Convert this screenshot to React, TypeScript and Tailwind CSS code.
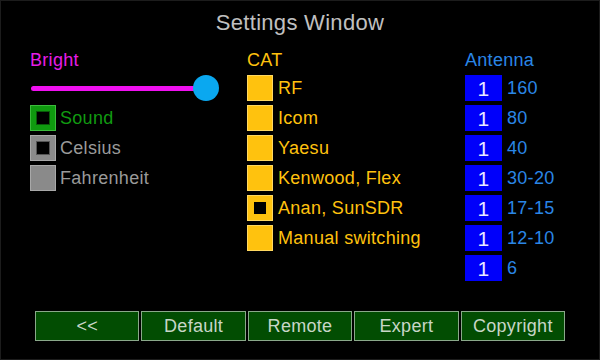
import React from "react";

const font = { fontFamily: '"Liberation Sans", Arial, sans-serif' };

function CheckBox({ variant }: { variant: "green" | "gray" | "grayFilled" }) {
  if (variant === "green")
    return (
      <div className="w-[26px] h-[26px] bg-[#0f9a0f] border border-[#3cbc3c] flex items-center justify-center shrink-0">
        <div className="w-[14px] h-[14px] bg-black border border-[#0a5a0a]" />
      </div>
    );
  if (variant === "gray")
    return (
      <div className="w-[26px] h-[26px] bg-[#8a8a8a] border border-[#a8a8a8] flex items-center justify-center shrink-0">
        <div className="w-[14px] h-[14px] bg-black border border-[#555]" />
      </div>
    );
  return <div className="w-[26px] h-[26px] bg-[#8a8a8a] border border-[#a8a8a8] shrink-0" />;
}

function CatBox({ checked }: { checked?: boolean }) {
  return (
    <div className="w-[26px] h-[26px] bg-[#ffc20e] border border-[#ffd860] flex items-center justify-center shrink-0">
      {checked && <div className="w-[12px] h-[12px] bg-black" />}
    </div>
  );
}

export default function App() {
  const cat = [
    { label: "RF" },
    { label: "Icom" },
    { label: "Yaesu" },
    { label: "Kenwood, Flex" },
    { label: "Anan, SunSDR", checked: true },
    { label: "Manual switching" },
  ];
  const ant = ["160", "80", "40", "30-20", "17-15", "12-10", "6"];
  const buttons = ["<<", "Default", "Remote", "Expert", "Copyright"];

  return (
    <div
      style={font}
      className="w-[600px] h-[360px] bg-black flex flex-col shadow-[inset_0_0_0_1px_#1c1c1c] overflow-hidden tracking-[0.3px]"
    >
      <div className="h-[46px] leading-[46px] text-center text-[22px] text-[#c0c0c0]">
        Settings Window
      </div>

      <div className="flex-1 flex pt-[4px] pl-[30px]">
        {/* Left column */}
        <div className="w-[217px] flex flex-col gap-[4px]">
          <div className="h-[21px] leading-[21px] text-[18px] text-[#e61ee6]">Bright</div>
          <div className="h-[26px] flex items-center">
            <div className="ml-[1px] w-[170px] h-[5px] rounded-full bg-[#f010f0]" />
            <div className="-ml-[8px] w-[26px] h-[26px] rounded-full bg-[#0aa8f0]" />
          </div>
          <div className="h-[26px] flex items-center gap-[4px]">
            <CheckBox variant="green" />
            <span className="text-[18px] text-[#119a11]">Sound</span>
          </div>
          <div className="h-[26px] flex items-center gap-[4px]">
            <CheckBox variant="gray" />
            <span className="text-[18px] text-[#9a9a9a]">Celsius</span>
          </div>
          <div className="h-[26px] flex items-center gap-[4px]">
            <CheckBox variant="grayFilled" />
            <span className="text-[18px] text-[#9a9a9a]">Fahrenheit</span>
          </div>
        </div>

        {/* CAT column */}
        <div className="w-[218px] flex flex-col gap-[4px]">
          <div className="h-[21px] leading-[21px] text-[18px] text-[#ffc20e]">CAT</div>
          {cat.map((c) => (
            <div key={c.label} className="h-[26px] flex items-center gap-[5px]">
              <CatBox checked={c.checked} />
              <span className="text-[18px] text-[#ffc20e] whitespace-nowrap">{c.label}</span>
            </div>
          ))}
        </div>

        {/* Antenna column */}
        <div className="flex flex-col gap-[4px]">
          <div className="h-[21px] leading-[21px] text-[18px] text-[#2a86e6]">Antenna</div>
          {ant.map((a) => (
            <div key={a} className="h-[26px] flex items-center gap-[5px]">
              <div className="w-[37px] h-[26px] bg-[#0000fa] flex items-center justify-center text-[21px] leading-none text-[#e8e8ff]">
                1
              </div>
              <span className="text-[18px] text-[#2a86e6]">{a}</span>
            </div>
          ))}
        </div>
      </div>

      <div className="flex gap-[2px] px-[35px] mb-[19px]">
        {buttons.map((b) => (
          <div
            key={b}
            className="flex-1 h-[30px] bg-[#024d02] border border-[#8aa88a] flex items-center justify-center text-[18px] text-[#c8d6c8]"
          >
            {b}
          </div>
        ))}
      </div>
    </div>
  );
}
